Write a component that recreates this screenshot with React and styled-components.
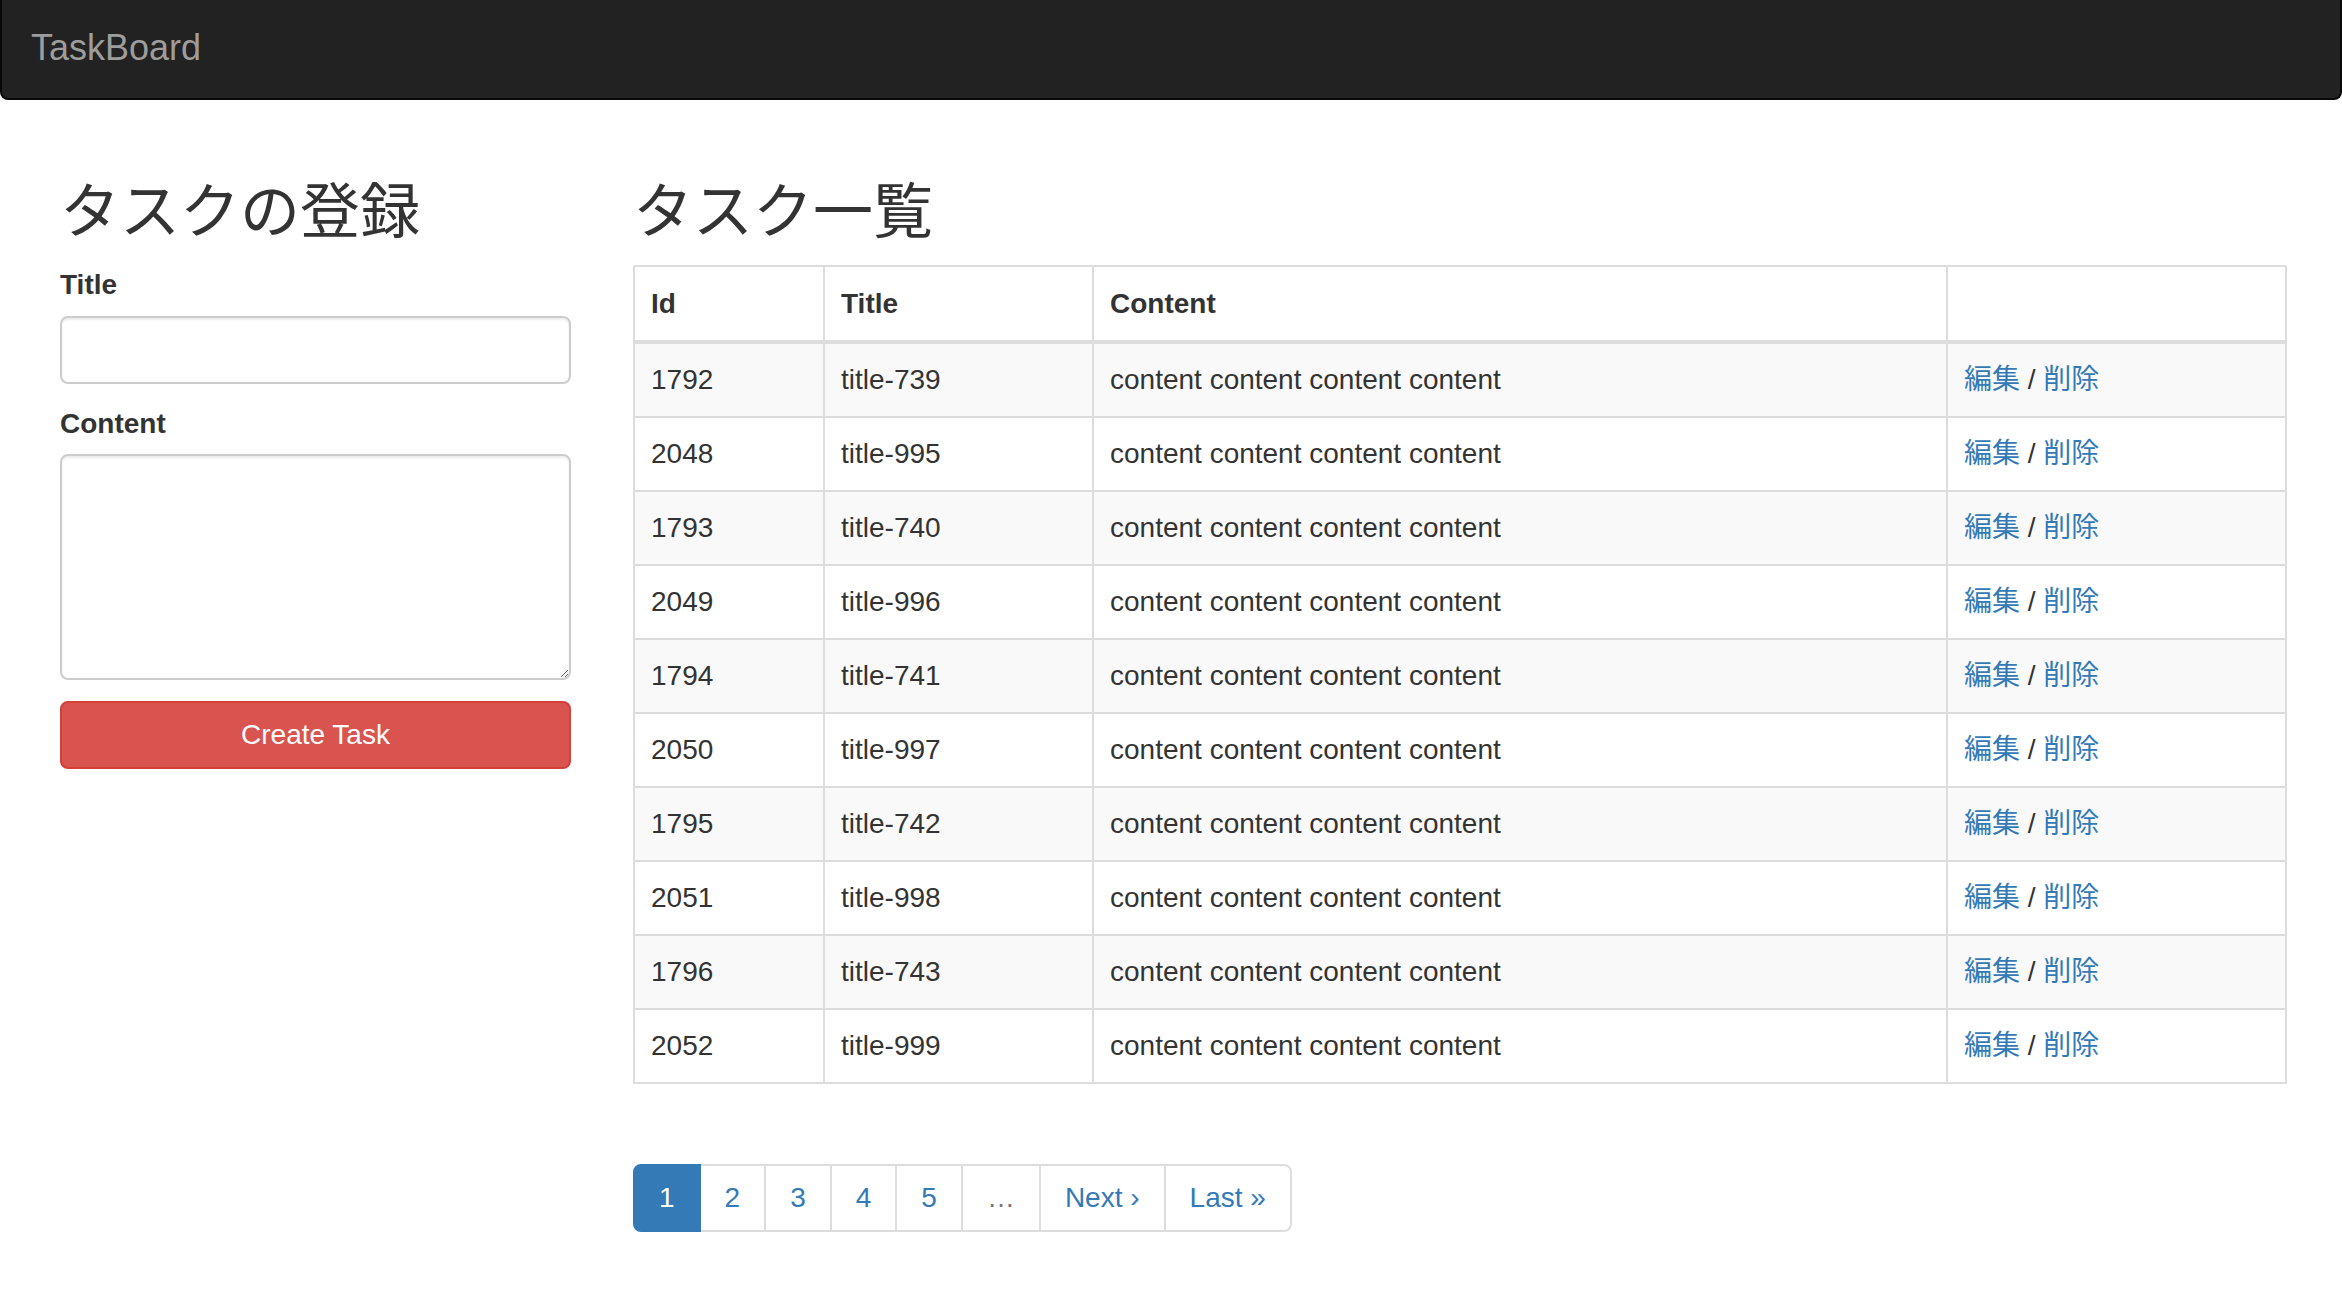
import React from 'react'
import styled, { createGlobalStyle } from 'styled-components'

const GlobalStyle = createGlobalStyle`
    body {
        margin: 0;
        background: #fff;
        color: #333;
        font-family: "Liberation Sans", "Noto Sans CJK JP", sans-serif;
        font-size: 28px;
        line-height: 40px;
    }
    * { box-sizing: border-box; }
`

const Navbar = styled.nav`
    height: 100px;
    background-color: #222;
    border: 2px solid #080808;
    border-top: 0;
    border-radius: 0 0 8px 8px;
    display: flex;
    align-items: center;
    padding: 0 29px 3px;
    margin-bottom: 40px;
`

const Brand = styled.a`
    color: #9d9d9d;
    font-size: 36px;
    line-height: 40px;
    text-decoration: none;
`

const Main = styled.div`
    display: grid;
    grid-template-columns: 511px 1652px;
    column-gap: 62px;
    padding-left: 60px;
    align-items: start;
`

const Heading = styled.h1`
    font-size: 60px;
    font-weight: 400;
    line-height: 66px;
    margin: 40px 0 19px;
`

const Label = styled.label`
    display: block;
    font-weight: 700;
    margin-bottom: ${p => p.$gap || 11}px;
`

const FormGroup = styled.div`
    margin-bottom: ${p => p.$gap || 20}px;
`

const Input = styled.input`
    display: block;
    width: 100%;
    height: 68px;
    border: 2px solid #ccc;
    border-radius: 8px;
    box-shadow: inset 0 2px 2px rgba(0,0,0,.075);
    font: inherit;
    padding: 12px 24px;
`

const TextArea = styled.textarea`
    display: block;
    width: 100%;
    height: 226px;
    border: 2px solid #ccc;
    border-radius: 8px;
    box-shadow: inset 0 2px 2px rgba(0,0,0,.075);
    font: inherit;
    padding: 12px 24px;
`

const DangerButton = styled.button`
    display: block;
    width: 100%;
    height: 68px;
    background-color: #d9534f;
    border: 2px solid #d43f3a;
    border-radius: 8px;
    color: #fff;
    font: inherit;
    cursor: pointer;
`

const Table = styled.table`
    width: 1652px;
    table-layout: fixed;
    border-collapse: collapse;
    border: 2px solid #ddd;
    margin-bottom: 80px;
`

const Th = styled.th`
    text-align: left;
    font-weight: 700;
    vertical-align: bottom;
    padding: 17px 16px 16px;
    border: 2px solid #ddd;
    border-bottom-width: 4px;
    line-height: 40px;
`

const Row = styled.tr`
    background-color: ${p => p.$striped ? '#f9f9f9' : '#fff'};
`

const Td = styled.td`
    padding: 16px;
    border: 2px solid #ddd;
    line-height: 40px;
    white-space: nowrap;
`

const Link = styled.a`
    color: #337ab7;
    text-decoration: none;
`

const Pagination = styled.ul`
    display: flex;
    list-style: none;
    margin: 0;
    padding: 0;
`

const PageItem = styled.li`
    margin-left: -2px;
    padding: 12px 24px;
    line-height: 40px;
    border: 2px solid ${p => p.$active ? '#337ab7' : '#ddd'};
    background-color: ${p => p.$active ? '#337ab7' : '#fff'};
    color: ${p => p.$active ? '#fff' : p.$muted ? '#777' : '#337ab7'};
    position: relative;
    z-index: ${p => p.$active ? 1 : 0};
    &:first-child {
        margin-left: 0;
        border-radius: 8px 0 0 8px;
    }
    &:last-child {
        border-radius: 0 8px 8px 0;
    }
`

const tasks = [
    [1792, 739], [2048, 995], [1793, 740], [2049, 996], [1794, 741],
    [2050, 997], [1795, 742], [2051, 998], [1796, 743], [2052, 999],
]

export default function App() {
    return (
        <>
            <GlobalStyle />
            <Navbar>
                <Brand href="#">TaskBoard</Brand>
            </Navbar>
            <Main>
                <section>
                    <Heading>タスクの登録</Heading>
                    <FormGroup $gap={20}>
                        <Label>Title</Label>
                        <Input type="text" />
                    </FormGroup>
                    <FormGroup $gap={21}>
                        <Label $gap={10}>Content</Label>
                        <TextArea />
                    </FormGroup>
                    <DangerButton>Create Task</DangerButton>
                </section>
                <section>
                    <Heading>タスク一覧</Heading>
                    <Table>
                        <colgroup>
                            <col style={{ width: 190 }} />
                            <col style={{ width: 269 }} />
                            <col style={{ width: 854 }} />
                            <col style={{ width: 339 }} />
                        </colgroup>
                        <thead>
                            <tr>
                                <Th>Id</Th>
                                <Th>Title</Th>
                                <Th>Content</Th>
                                <Th></Th>
                            </tr>
                        </thead>
                        <tbody>
                            {tasks.map(([id, n], i) => (
                                <Row key={id} $striped={i % 2 === 0}>
                                    <Td>{id}</Td>
                                    <Td>title-{n}</Td>
                                    <Td>content content content content</Td>
                                    <Td>
                                        <Link href="#">編集</Link> / <Link href="#">削除</Link>
                                    </Td>
                                </Row>
                            ))}
                        </tbody>
                    </Table>
                    <Pagination>
                        <PageItem $active>1</PageItem>
                        <PageItem>2</PageItem>
                        <PageItem>3</PageItem>
                        <PageItem>4</PageItem>
                        <PageItem>5</PageItem>
                        <PageItem $muted>…</PageItem>
                        <PageItem>Next ›</PageItem>
                        <PageItem>Last »</PageItem>
                    </Pagination>
                </section>
            </Main>
        </>
    )
}
